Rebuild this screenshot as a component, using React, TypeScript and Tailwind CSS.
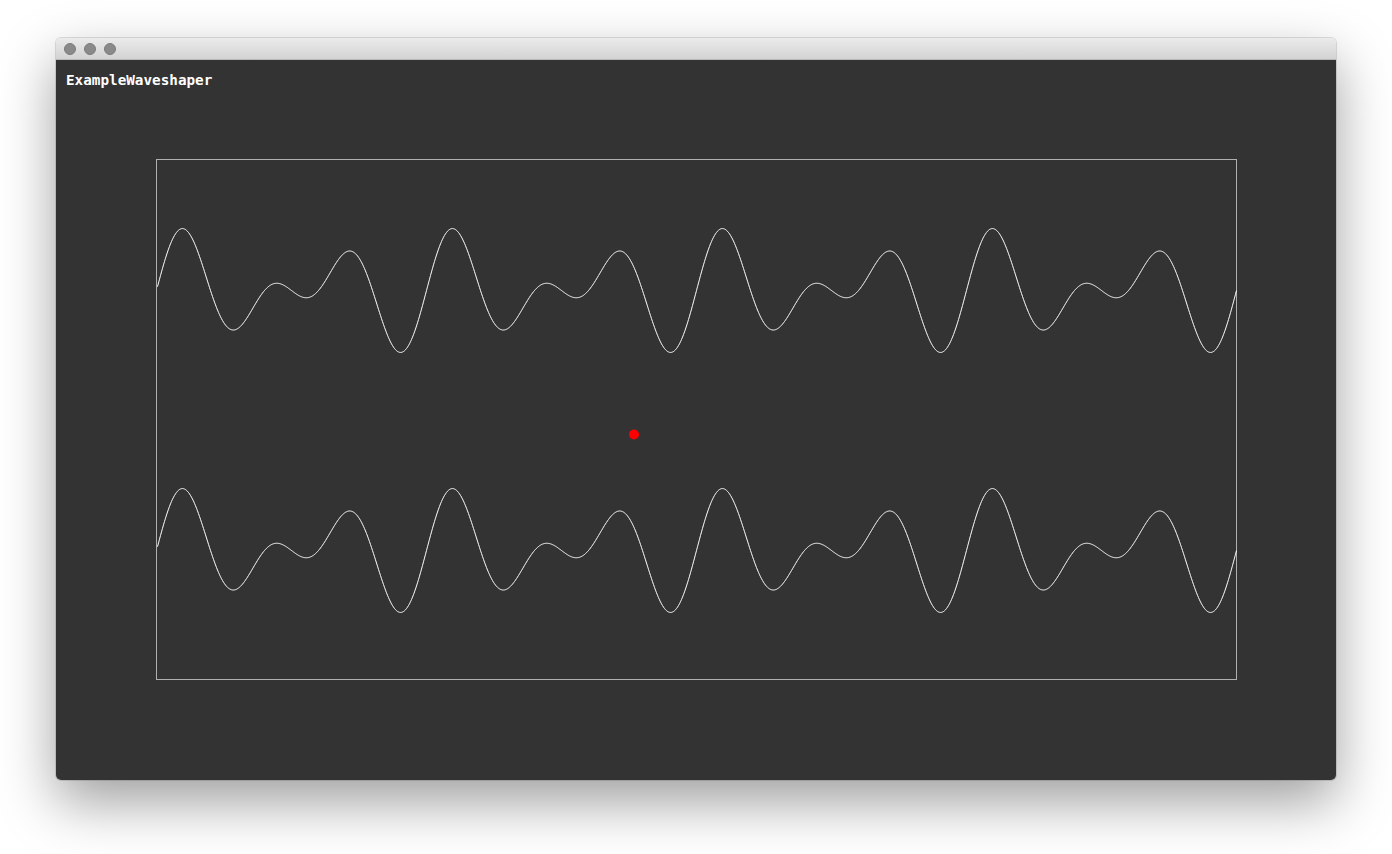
import React from "react";

function wavePath(center: number): string {
  const pts: string[] = [];
  for (let x = 1; x <= 1080; x++) {
    const t = (2 * Math.PI * x) / 270;
    const y = center - 32.5 * (Math.sin(2 * t) + Math.sin(3 * t));
    pts.push(`${x === 1 ? "M" : "L"}${(x + 0.5).toFixed(2)} ${(y + 0.5).toFixed(2)}`);
  }
  return pts.join(" ");
}

export default function App() {
  const upper = wavePath(131);
  const lower = wavePath(391);
  return (
    <div className="w-[1392px] h-[854px] bg-white pt-[38px] pl-[56px] overflow-hidden">
      <div className="w-[1280px] rounded-[5px] overflow-hidden shadow-[0_22px_55px_rgba(0,0,0,0.38),0_0_0_1px_rgba(0,0,0,0.12)]">
        <div className="h-[22px] flex items-center gap-[8px] pl-[8px] bg-gradient-to-b from-[#ebebeb] to-[#d3d3d3] border-b border-[#b8b8b8]">
          <div className="w-[12px] h-[12px] rounded-full bg-[#8a8a8a] border border-[#7c7c7c]" />
          <div className="w-[12px] h-[12px] rounded-full bg-[#8a8a8a] border border-[#7c7c7c]" />
          <div className="w-[12px] h-[12px] rounded-full bg-[#8a8a8a] border border-[#7c7c7c]" />
        </div>
        <div className="h-[720px] bg-[#333333] flex flex-col">
          <div className="h-[99px] pt-[13px] pl-[10px]">
            <div
              className="text-[14.3px] leading-none font-bold text-white"
              style={{ fontFamily: '"DejaVu Sans Mono", "Liberation Mono", monospace' }}
            >
              ExampleWaveshaper
            </div>
          </div>
          <div className="relative ml-[100px] w-[1081px] h-[521px] border border-[#b0b0b0]">
            <svg
              className="absolute left-[-1px] top-[-1px]"
              width={1081}
              height={521}
              viewBox="0 0 1081 521"
              overflow="visible"
            >
              <path d={upper} fill="none" stroke="#ffffff" strokeWidth={1} />
              <path d={lower} fill="none" stroke="#ffffff" strokeWidth={1} />
              <circle cx={478} cy={275.5} r={5} fill="#ff0000" />
            </svg>
          </div>
        </div>
      </div>
    </div>
  );
}
